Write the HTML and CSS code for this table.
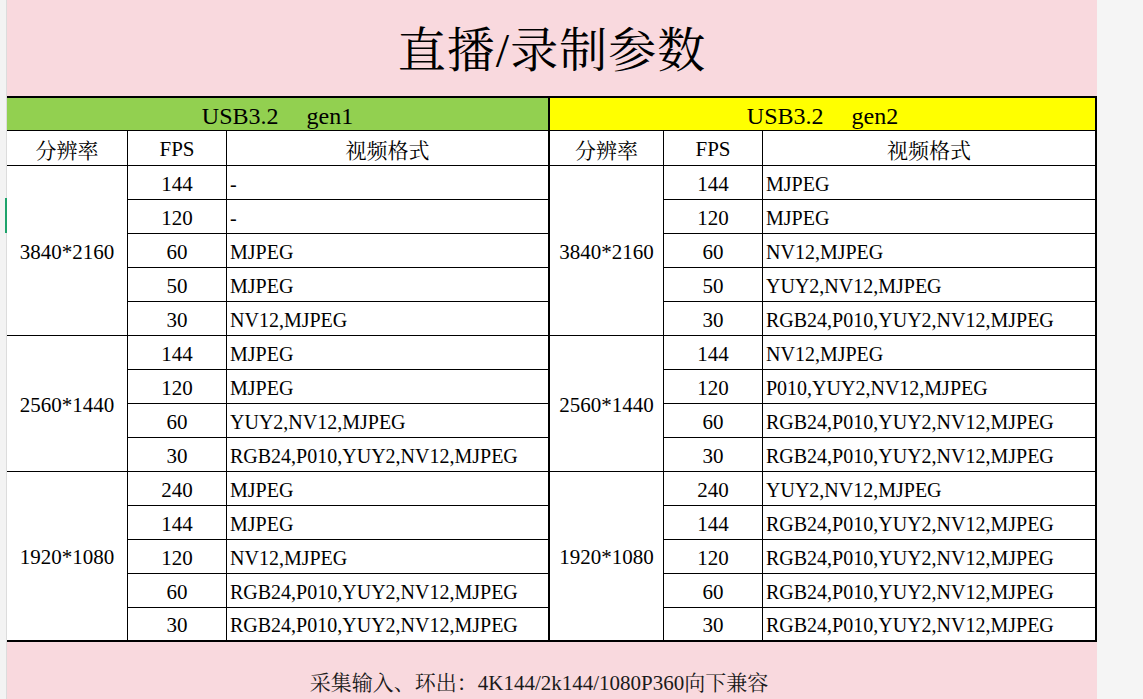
FILE: index.html
```html
<!DOCTYPE html>
<html lang="zh-CN">
<head>
<meta charset="utf-8">
<title>直播/录制参数</title>
<link rel="stylesheet" href="styles.css">
</head>
<body>
<div class="page">
  <div class="gutter"><span class="mark"></span></div>
  <div class="sheet">
    <div class="title">直播/录制参数</div>
    <div class="grid">
      <div class="c hd gen1 sep">USB3.2 gen1</div>
      <div class="c hd gen2 end">USB3.2 gen2</div>

      <div class="c cjk">分辨率</div>
      <div class="c">FPS</div>
      <div class="c cjk sep">视频格式</div>
      <div class="c cjk">分辨率</div>
      <div class="c">FPS</div>
      <div class="c cjk end">视频格式</div>

      <!-- 3840*2160 -->
      <div class="c res">3840*2160</div>
      <div class="c">144</div>
      <div class="c fmt sep">-</div>
      <div class="c res">3840*2160</div>
      <div class="c">144</div>
      <div class="c fmt end">MJPEG</div>

      <div class="c">120</div>
      <div class="c fmt sep">-</div>
      <div class="c">120</div>
      <div class="c fmt end">MJPEG</div>

      <div class="c">60</div>
      <div class="c fmt sep">MJPEG</div>
      <div class="c">60</div>
      <div class="c fmt end">NV12,MJPEG</div>

      <div class="c">50</div>
      <div class="c fmt sep">MJPEG</div>
      <div class="c">50</div>
      <div class="c fmt end">YUY2,NV12,MJPEG</div>

      <div class="c">30</div>
      <div class="c fmt sep">NV12,MJPEG</div>
      <div class="c">30</div>
      <div class="c fmt end">RGB24,P010,YUY2,NV12,MJPEG</div>

      <!-- 2560*1440 -->
      <div class="c res r4">2560*1440</div>
      <div class="c">144</div>
      <div class="c fmt sep">MJPEG</div>
      <div class="c res r4">2560*1440</div>
      <div class="c">144</div>
      <div class="c fmt end">NV12,MJPEG</div>

      <div class="c">120</div>
      <div class="c fmt sep">MJPEG</div>
      <div class="c">120</div>
      <div class="c fmt end">P010,YUY2,NV12,MJPEG</div>

      <div class="c">60</div>
      <div class="c fmt sep">YUY2,NV12,MJPEG</div>
      <div class="c">60</div>
      <div class="c fmt end">RGB24,P010,YUY2,NV12,MJPEG</div>

      <div class="c">30</div>
      <div class="c fmt sep">RGB24,P010,YUY2,NV12,MJPEG</div>
      <div class="c">30</div>
      <div class="c fmt end">RGB24,P010,YUY2,NV12,MJPEG</div>

      <!-- 1920*1080 -->
      <div class="c res last">1920*1080</div>
      <div class="c">240</div>
      <div class="c fmt sep">MJPEG</div>
      <div class="c res last">1920*1080</div>
      <div class="c">240</div>
      <div class="c fmt end">YUY2,NV12,MJPEG</div>

      <div class="c">144</div>
      <div class="c fmt sep">MJPEG</div>
      <div class="c">144</div>
      <div class="c fmt end">RGB24,P010,YUY2,NV12,MJPEG</div>

      <div class="c">120</div>
      <div class="c fmt sep">NV12,MJPEG</div>
      <div class="c">120</div>
      <div class="c fmt end">RGB24,P010,YUY2,NV12,MJPEG</div>

      <div class="c">60</div>
      <div class="c fmt sep">RGB24,P010,YUY2,NV12,MJPEG</div>
      <div class="c">60</div>
      <div class="c fmt end">RGB24,P010,YUY2,NV12,MJPEG</div>

      <div class="c last">30</div>
      <div class="c fmt sep last">RGB24,P010,YUY2,NV12,MJPEG</div>
      <div class="c last">30</div>
      <div class="c fmt end last">RGB24,P010,YUY2,NV12,MJPEG</div>
    </div>
    <div class="footer">采集输入、环出：4K144/2k144/1080P360向下兼容</div>
  </div>
</div>
</body>
</html>
```

FILE: styles.css
```css
html, body {
  margin: 0;
  padding: 0;
}

body {
  background: #f5f5f5;
  font-family: "Liberation Serif", "Noto Serif CJK SC", "Noto Sans CJK SC", serif;
  color: #000;
}

.page {
  display: flex;
  height: 699px;
  overflow: hidden;
}

.gutter {
  position: relative;
  width: 6px;
  flex: 0 0 6px;
  background: #f3f3f3;
  border-right: 1px solid #dcdcdc;
}

.mark {
  position: absolute;
  right: -1px;
  top: 198px;
  width: 2px;
  height: 35px;
  background: #1ea36b;
}

.sheet {
  width: 1090px;
  flex: 0 0 1090px;
  background: #f9d9de;
  display: flex;
  flex-direction: column;
}

.title {
  height: 96px;
  flex: 0 0 96px;
  box-sizing: border-box;
  padding-bottom: 4px;
  display: flex;
  align-items: center;
  justify-content: center;
  font-size: 48px;
  letter-spacing: 1px;
}

.grid {
  display: grid;
  grid-template-columns: 121px 99px 323px 114px 99px 332px;
  grid-template-rows: 33px 35px repeat(13, 34px) 32px;
  border-top: 2px solid #000;
  border-bottom: 2px solid #000;
  border-right: 2px solid #000;
  font-size: 21px;
}

.c {
  box-sizing: border-box;
  background: #fff;
  border-right: 1px solid #000;
  border-bottom: 1px solid #000;
  display: flex;
  align-items: center;
  justify-content: center;
  padding-top: 3px;
  white-space: nowrap;
}

.cjk {
  padding-top: 1px;
}

.hd {
  grid-column: span 3;
  font-size: 24px;
  white-space: pre;
  word-spacing: 22px;
  padding-top: 5px;
}

.gen1 {
  background: #92d050;
}

.gen2 {
  background: #ffff00;
}

.sep {
  border-right: 2px solid #000;
}

.end {
  border-right: none;
}

.fmt {
  justify-content: flex-start;
  padding-left: 3px;
  font-size: 20px;
}

.res {
  grid-row: span 5;
}

.res.r4 {
  grid-row: span 4;
}

.last {
  border-bottom: none;
}

.footer {
  flex: 1;
  box-sizing: border-box;
  padding: 27px 26px 0 0;
  text-align: center;
  font-size: 21px;
  line-height: 28px;
  color: #1a1a1a;
}
```
